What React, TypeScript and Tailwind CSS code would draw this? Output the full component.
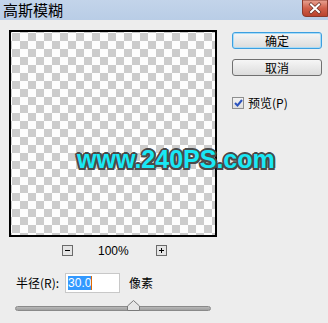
import React from 'react';

const cjk = "font-['SimSun','Noto_Sans_CJK_SC',sans-serif]";

function DialogButton({ label, primary }: { label: string; primary?: boolean }) {
  return (
    <div
      className={`flex h-[17px] w-[90px] items-center justify-center rounded-[3px] border bg-gradient-to-b from-[#f6f6f6] to-[#dcdcdc] text-[12px] leading-none text-black ${
        primary ? 'border-[#3c9fe0] shadow-[inset_0_0_0_1px_#a9dcf7]' : 'border-[#707070]'
      }`}
    >
      {label}
    </div>
  );
}

function CloseButton() {
  return (
    <svg width="26" height="17" viewBox="0 0 26 17" className="block shrink-0">
      <defs>
        <linearGradient id="closeRed" x1="0" y1="0" x2="0" y2="1">
          <stop offset="0" stopColor="#e9a595" />
          <stop offset="0.5" stopColor="#d0604a" />
          <stop offset="1" stopColor="#b9412b" />
        </linearGradient>
      </defs>
      <path d="M0.5 0 L25.5 0 L25.5 16.5 L4 16.5 Q0.5 16.5 0.5 13 Z" fill="url(#closeRed)" stroke="#8a3a2c" />
      <path d="M9 4.5 L17 12 M17 4.5 L9 12" stroke="#6a3026" strokeWidth="3.4" strokeLinecap="square" />
      <path d="M9 4.5 L17 12 M17 4.5 L9 12" stroke="#ffffff" strokeWidth="2" strokeLinecap="square" />
    </svg>
  );
}

export default function App() {
  return (
    <div className={`flex h-[323px] w-[328px] flex-col overflow-hidden bg-[#ededed] ${cjk}`}>
      {/* Title bar */}
      <div className="flex h-[20px] w-full shrink-0 items-start bg-gradient-to-b from-[#c3d4ea] to-[#b9cde6]">
        <span className="flex-1 pl-[3px] pt-[2px] text-[15px] leading-[16px] text-black">高斯模糊</span>
        <CloseButton />
      </div>

      <div className="relative flex flex-1">
        {/* Left column */}
        <div className="flex flex-col pl-[9px] pt-[10px]">
          <div className="h-[207px] w-[208px] border-2 border-black bg-[#fdfdfd] bg-[conic-gradient(#cccccc_25%,#fdfdfd_0_50%,#cccccc_0_75%,#fdfdfd_0)] bg-[length:16px_16px] bg-[position:1px_-7px]" />

          <div className="mt-[7px] flex h-[13px] items-center text-[12px] text-black">
            <div className="ml-[53px] flex h-[11px] w-[11px] items-center justify-center border border-[#6a6a6a] bg-[#e4e4e4]">
              <div className="h-px w-[5px] bg-black" />
            </div>
            <span className="ml-[25px] font-['Liberation_Sans',sans-serif] text-[12px]">100%</span>
            <div className="relative ml-[27px] flex h-[11px] w-[11px] items-center justify-center border border-[#6a6a6a] bg-[#e4e4e4]">
              <div className="h-px w-[5px] bg-black" />
              <div className="absolute h-[5px] w-px bg-black" />
            </div>
          </div>

          <div className="mt-[16px] flex h-[20px] items-center text-[12px] text-black">
            <span className="ml-[7px]">半径(R):</span>
            <div className="ml-[6px] flex h-[20px] w-[55px] items-center border border-[#c8c8c8] bg-white pl-[2px]">
              <span className="bg-[#3399ff] font-['Liberation_Sans',sans-serif] text-[12px] leading-[14px] text-white">30.0</span>
              <span className="h-[14px] w-px bg-[#e06a00]" />
            </div>
            <span className="ml-[9px]">像素</span>
          </div>

          <div className="relative ml-[6px] mt-[13px] h-[5px] w-[196px] rounded-full border border-[#8a8a8a] bg-gradient-to-b from-[#b8b8b8] to-[#a0a0a0]">
            <svg className="absolute left-[111px] top-[-7px]" width="13" height="11" viewBox="0 0 13 11">
              <path d="M6.5 0.5 L12.5 6 L12.5 10.5 L0.5 10.5 L0.5 6 Z" fill="#e6e6e6" stroke="#7a7a7a" />
            </svg>
          </div>
        </div>

        {/* Right column */}
        <div className="ml-[15px] flex flex-col pt-[12px]">
          <DialogButton label="确定" primary />
          <div className="mt-[10px]">
            <DialogButton label="取消" />
          </div>
          <label className="mt-[18px] flex items-center text-[12px] text-black">
            <span className="flex h-[12px] w-[12px] items-center justify-center border border-[#8e8f8f] bg-gradient-to-b from-[#f2f2f2] to-[#dedede]">
              <svg width="9" height="8" viewBox="0 0 9 8">
                <path d="M1 4 L3.5 6.5 L8 1" fill="none" stroke="#2a52be" strokeWidth="2" />
              </svg>
            </span>
            <span className="ml-[4px]">预览(P)</span>
          </label>
        </div>

        {/* Watermark overlay */}
        <span className="absolute left-[77px] top-[127px] font-['Liberation_Sans',sans-serif] text-[25px] font-bold leading-none text-[#19e8f5] [text-shadow:2px_0_#4a4a4a,-2px_0_#4a4a4a,0_2px_#4a4a4a,0_-2px_#4a4a4a,1.5px_1.5px_#4a4a4a,-1.5px_-1.5px_#4a4a4a,1.5px_-1.5px_#4a4a4a,-1.5px_1.5px_#4a4a4a]">
          www.240PS.com
        </span>
      </div>
    </div>
  );
}
